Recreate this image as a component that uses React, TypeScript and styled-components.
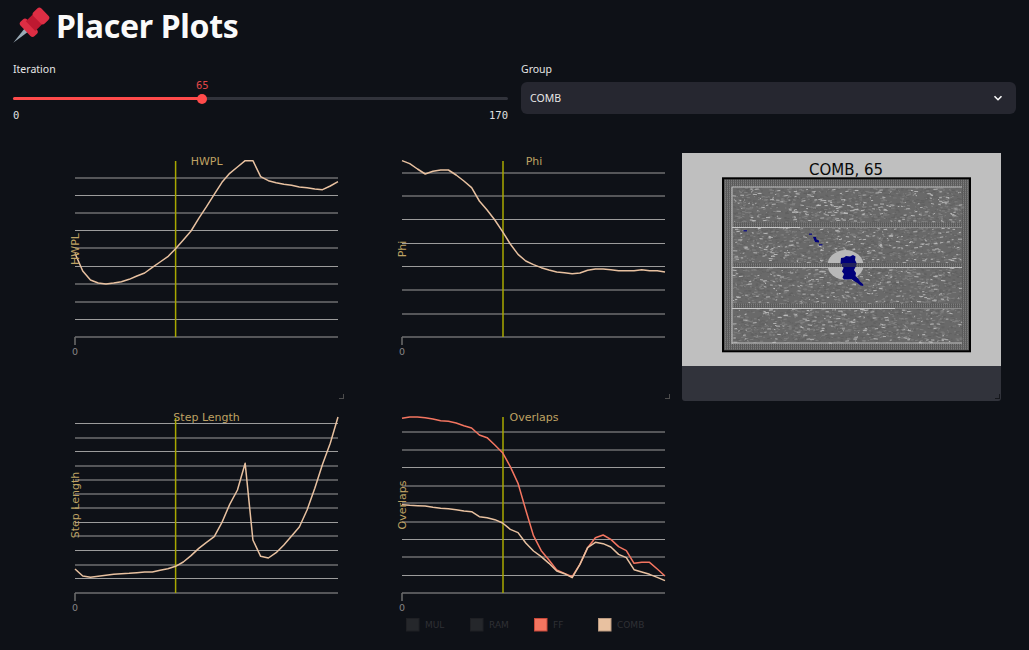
import React, { useMemo } from "react";
import styled, { createGlobalStyle } from "styled-components";

const GlobalStyle = createGlobalStyle`
  html, body {
    margin: 0;
    height: 100%;
    overflow: hidden;
    background: #0e1117;
  }
`;

const Page = styled.div`
  width: 1029px;
  height: 650px;
  padding: 0 13px;
  box-sizing: border-box;
  background: #0e1117;
  color: #fafafa;
  font-family: "Noto Sans", sans-serif;
`;

const Header = styled.header`
  display: flex;
  align-items: center;
  gap: 6px;
  height: 52px;
  margin: 0 0 10px -1px;
`;

const Title = styled.h1`
  margin: 0;
  font-size: 32px;
  line-height: 52px;
  font-weight: 700;
  letter-spacing: -0.3px;
`;

const Controls = styled.section`
  display: grid;
  grid-template-columns: 495px 495px;
  column-gap: 13px;
`;

const Field = styled.div`
  display: flex;
  flex-direction: column;
`;

const FieldLabel = styled.label`
  height: 20px;
  font-size: 10.5px;
  line-height: 15px;
  color: #e6e6e6;
`;

const SliderBody = styled.div`
  position: relative;
  height: 40px;
  padding-top: 15px;
  box-sizing: border-box;
`;

const Track = styled.div`
  height: 3px;
  border-radius: 2px;
  background: #31333b;
`;

const TrackFill = styled.div`
  height: 100%;
  border-radius: 2px;
  background: #ff4b4b;
`;

const Thumb = styled.div`
  position: absolute;
  top: 11.5px;
  width: 10px;
  height: 10px;
  margin-left: -5px;
  border-radius: 50%;
  background: #ff4b4b;
`;

const ThumbValue = styled.div`
  position: absolute;
  top: -3px;
  width: 40px;
  margin-left: -20px;
  text-align: center;
  font-family: "DejaVu Sans Mono", monospace;
  font-size: 10.5px;
  line-height: 12px;
  color: #e04646;
`;

const SliderTicks = styled.div`
  display: flex;
  justify-content: space-between;
  margin-top: 9px;
  font-family: "DejaVu Sans Mono", monospace;
  font-size: 10.5px;
  line-height: 12px;
  color: #e0e0e0;
`;

const Select = styled.div`
  display: flex;
  align-items: center;
  justify-content: space-between;
  height: 32px;
  padding: 0 13px 1px 9px;
  box-sizing: border-box;
  border-radius: 6px;
  background: #262730;
  font-size: 10.5px;
  color: #e6e6e6;
`;

const Board = styled.section`
  display: grid;
  grid-template-columns: 329px 326px 319px;
  grid-template-rows: 256px 239px;
  margin: 23px 0 0 3px;
`;

const ChartCell = styled.div`
  position: relative;
`;

const ChartSvg = styled.svg`
  display: block;
  width: 100%;
  height: 100%;
`;

const ResizeHandle = styled.span<{ $color: string }>`
  position: absolute;
  right: 1px;
  bottom: 2px;
  width: 4px;
  height: 4px;
  border-right: 1px solid ${({ $color }) => $color};
  border-bottom: 1px solid ${({ $color }) => $color};
`;

const Panel = styled.div`
  position: relative;
  display: flex;
  flex-direction: column;
  height: 248px;
  margin: 8px 0 0 11px;
  width: 319px;
  border-radius: 0 0 3px 3px;
  overflow: hidden;
  background: #31333b;
`;

const PanelSvg = styled.svg`
  display: block;
  width: 319px;
  height: 213px;
  flex: none;
`;

const GridLine = styled.line`
  stroke: #9c9c9c;
  stroke-width: 1;
`;

const AxisTick = styled.line`
  stroke: #6e6e6e;
  stroke-width: 1.5;
`;

const Marker = styled.line`
  stroke: #a8a800;
  stroke-width: 1.5;
`;

const Curve = styled.polyline<{ $color: string }>`
  fill: none;
  stroke: ${({ $color }) => $color};
  stroke-width: 1.5;
  stroke-linejoin: round;
`;

const ChartText = styled.text`
  font-family: "DejaVu Sans", sans-serif;
  font-size: 11px;
  fill: #bfa263;
`;

const TickText = styled.text`
  font-family: "DejaVu Sans", sans-serif;
  font-size: 9.5px;
  fill: #858585;
`;

const LegendText = styled.text`
  font-family: "DejaVu Sans", sans-serif;
  font-size: 9px;
  fill: #2e3035;
`;

const LegendSwatch = styled.rect<{ $fill: string; $line: string }>`
  fill: ${({ $fill }) => $fill};
  stroke: ${({ $line }) => $line};
  stroke-width: 1;
`;

const FigureTitle = styled.text`
  font-family: "DejaVu Sans", sans-serif;
  font-size: 15px;
  fill: #0a0a0a;
`;

const COMB = "#e8c1a0";
const FF = "#f47560";

interface Series {
  color: string;
  values: number[]; // page y offsets times 3, measured against base
}

interface ChartSpec {
  title: string;
  left: number; // page x of the y axis
  top: number; // page y of the cell
  height: number;
  width: number;
  cellLeft: number;
  base: number; // y offset the series values are measured from
  bottom: number;
  markerX: number;
  markerTop: number;
  titleY: number;
  labelY: number;
  grid: number[];
  series: Series[];
  legend?: boolean;
  handle?: boolean;
}

const charts: ChartSpec[] = [
  {
    title: "HWPL",
    cellLeft: 16,
    left: 75,
    top: 145,
    width: 329,
    height: 256,
    base: 145,
    bottom: 337,
    markerX: 175.6,
    markerTop: 161,
    titleY: 165,
    labelY: 249,
    grid: [178, 195.5, 213, 230.5, 248, 266.5, 284, 302, 319.5, 337],
    handle: true,
    series: [
      {
        color: COMB,
        values: [
          325, 378, 405, 414, 417, 414, 410, 403, 393, 384, 367, 351, 335, 311,
          285, 258, 220, 185, 148, 112, 85, 66, 47, 47, 95, 107, 113, 118, 121,
          126, 128, 132, 134, 123, 110,
        ],
      },
    ],
  },
  {
    title: "Phi",
    cellLeft: 345,
    left: 402,
    top: 145,
    width: 326,
    height: 256,
    base: 145,
    bottom: 337,
    markerX: 503,
    markerTop: 161,
    titleY: 165,
    labelY: 249,
    grid: [173, 196, 219.5, 243.5, 266.5, 290, 314, 337],
    handle: true,
    series: [
      {
        color: COMB,
        values: [
          47, 56, 72, 87, 79, 75, 75, 90, 108, 128, 168, 195, 225, 260, 297, 328,
          348, 359, 368, 375, 381, 383, 386, 384, 376, 372, 372, 374, 377, 377,
          377, 374, 377, 377, 381,
        ],
      },
    ],
  },
  {
    title: "Step Length",
    cellLeft: 16,
    left: 75,
    top: 401,
    width: 329,
    height: 239,
    base: 405,
    bottom: 593,
    markerX: 175.6,
    markerTop: 418,
    titleY: 421,
    labelY: 505,
    grid: [
      423.5, 438, 451.5, 466, 480, 494, 508, 522.5, 536, 550.5, 565, 578.5, 593,
    ],
    series: [
      {
        color: COMB,
        values: [
          492, 513, 517, 514, 511, 508, 506, 505, 503, 501, 501, 496, 491, 484,
          471, 452, 430, 412, 395, 352, 298, 255, 175, 405, 454, 459, 443, 420,
          393, 366, 315, 250, 178, 115, 36,
        ],
      },
    ],
  },
  {
    title: "Overlaps",
    cellLeft: 345,
    left: 402,
    top: 401,
    width: 326,
    height: 239,
    base: 405,
    bottom: 593,
    markerX: 503,
    markerTop: 417,
    titleY: 421,
    labelY: 505,
    grid: [432, 450, 467.5, 486, 503, 522, 539.5, 557, 575.5, 593],
    legend: true,
    series: [
      {
        color: FF,
        values: [
          40, 36, 36, 38, 42, 47, 49, 54, 62, 69, 90, 98, 120, 143, 185, 235, 315,
          392, 437, 465, 495, 505, 515, 478, 428, 398, 390, 403, 425, 437, 475,
          472, 472, 492, 513,
        ],
      },
      {
        color: COMB,
        values: [
          299, 301, 302, 303, 307, 310, 311, 314, 318, 320, 335, 338, 344, 354,
          373, 383, 414, 438, 455, 475, 498, 506, 518, 478, 428, 412, 416, 426,
          448, 458, 494, 501, 508, 517, 527,
        ],
      },
    ],
  },
];

const legendItems = [
  { label: "MUL", x: 406, fill: "#25272b", line: "#1f2024" },
  { label: "RAM", x: 470, fill: "#25272b", line: "#1f2024" },
  { label: "FF", x: 534, fill: "#f47560", line: "#c9493a" },
  { label: "COMB", x: 598, fill: "#e8c1a0", line: "#b99a80" },
];

const AXIS_WIDTH = 263;

const Chart: React.FC<{ spec: ChartSpec }> = ({ spec }) => (
  <ChartCell>
    <ChartSvg viewBox={`${spec.cellLeft} ${spec.top} ${spec.width} ${spec.height}`}>
      {spec.grid.map((y) => (
        <GridLine key={y} x1={spec.left} x2={spec.left + AXIS_WIDTH} y1={y} y2={y} />
      ))}
      <AxisTick x1={spec.left} x2={spec.left} y1={spec.bottom} y2={spec.bottom + 8} />
      <TickText x={spec.left} y={spec.bottom + 18} textAnchor="middle">
        0
      </TickText>
      <Marker x1={spec.markerX} x2={spec.markerX} y1={spec.markerTop} y2={spec.bottom} />
      {spec.series.map((s) => (
        <Curve
          key={s.color}
          $color={s.color}
          points={s.values
            .map((v, i) => `${spec.left + (AXIS_WIDTH * i) / 34},${spec.base + v / 3}`)
            .join(" ")}
        />
      ))}
      <ChartText x={spec.markerX + 31} y={spec.titleY} textAnchor="middle">
        {spec.title}
      </ChartText>
      <ChartText
        x={spec.left + 4}
        y={spec.labelY}
        textAnchor="middle"
        transform={`rotate(-90 ${spec.left + 4} ${spec.labelY})`}
      >
        {spec.title}
      </ChartText>
      {spec.legend &&
        legendItems.map((item) => (
          <g key={item.label}>
            <LegendSwatch
              x={item.x + 0.5}
              y={618.5}
              width={12.5}
              height={12.5}
              $fill={item.fill}
              $line={item.line}
            />
            <LegendText x={item.x + 19} y={628}>
              {item.label}
            </LegendText>
          </g>
        ))}
    </ChartSvg>
    {spec.handle && <ResizeHandle $color="#4c4c4c" />}
  </ChartCell>
);

function makeNoise(count: number, seed: number, maxLength: number) {
  let state = seed;
  const rand = () => {
    state = (state * 1664525 + 1013904223) % 4294967296;
    return state / 4294967296;
  };
  let d = "";
  for (let i = 0; i < count; i++) {
    const x = 732 + rand() * 229;
    const y = 188 + rand() * 155;
    const w = 0.8 + rand() * maxLength;
    const tilt = (rand() - 0.5) * 1.2;
    d += `M${x.toFixed(1)} ${y.toFixed(1)}l${w.toFixed(1)} ${tilt.toFixed(1)}`;
  }
  return d;
}

const bands = [222.5, 263, 303.5];

// light rows between the macro bands: [y, from, to, colour]
const rowLines: [number, number, number, string][] = [
  [187, 732, 962, "#bdbdbd"],
  [227.5, 732, 800, "#c8c8c8"],
  [227.5, 800, 962, "#8c8c8c"],
  [267.5, 732, 962, "#bdbdbd"],
  [308.5, 732, 895, "#c8c8c8"],
  [308.5, 895, 962, "#8c8c8c"],
  [343, 732, 962, "#c0c0c0"],
];

const BLOB =
  "M841 258 L844 257.5 L846 256 L850 256.5 L853 255 L855.5 256.5 L855 260 L856.5 263 L855.5 267 L854 270 L856 273 L855.5 276 L858.5 279 L860 281.5 L863 284 L863.5 286 L860.5 285.5 L857.5 283 L854 281 L851.5 279 L848 279.5 L844 279.5 L842.5 277.5 L844 274 L842 271.5 L843.5 268 L842.5 265 L840.5 263 Z";

// the placement plot: noise of placed cells, macro rows, and the blue cluster
const PlacementFigure: React.FC = () => {
  const noiseDark = useMemo(() => makeNoise(2600, 11, 3), []);
  const noiseMid = useMemo(() => makeNoise(2200, 29, 3), []);
  const noiseLight = useMemo(() => makeNoise(800, 47, 3.5), []);

  return (
    <PanelSvg viewBox="682 153 319 213">
      <defs>
        <pattern id="hatch" width="2" height="2" patternUnits="userSpaceOnUse">
          <rect width="2" height="2" fill="#7c7c7c" />
          <rect width="1" height="2" fill="#585858" />
          <rect y="1" width="2" height="0.6" fill="#5e5e5e" />
        </pattern>
      </defs>
      <rect x="682" y="153" width="319" height="213" fill="#bfbfbf" />
      <FigureTitle x="846" y="175" textAnchor="middle">
        COMB, 65
      </FigureTitle>
      <rect x="723" y="178" width="247" height="173" fill="#686868" />
      <rect x="724" y="179" width="245" height="171" fill="url(#hatch)" />
      <rect x="732" y="187" width="230" height="157" fill="#696969" />
      <path d={noiseDark} stroke="#606060" strokeWidth="0.9" fill="none" />
      <path d={noiseMid} stroke="#828282" strokeWidth="0.9" fill="none" />
      <path d={noiseLight} stroke="#bdbdbd" strokeWidth="0.9" fill="none" />
      <ellipse cx="845.5" cy="265" rx="18" ry="15" fill="#b8b8b8" />
      {bands.map((y) => (
        <rect key={y} x="732" y={y} width="230" height="4.5" fill="url(#hatch)" />
      ))}
      {rowLines.map(([y, x1, x2, color]) => (
        <line key={`${y}-${x1}`} x1={x1} x2={x2} y1={y} y2={y} stroke={color} strokeWidth="1" />
      ))}
      <line x1="732" x2="732" y1="187" y2="344" stroke="#c4c4c4" strokeWidth="1" />
      <path d={BLOB} fill="#00007a" />
      <rect x="842" y="263" width="14" height="4" fill="#23235c" />
      <path d="M813 237 L816 237 L816.5 239.5 L819 240.5 L819 242.5 L815 242 Z" fill="#00007a" />
      <rect x="809" y="233.5" width="3" height="1.5" fill="#1b1b80" />
      <rect x="819" y="244" width="3.5" height="1.5" fill="#1b1b80" />
      <rect x="743.5" y="230" width="3.5" height="1.5" fill="#1b1b80" />
      <rect x="723" y="178.3" width="247" height="173" fill="none" stroke="#000" strokeWidth="2" />
    </PanelSvg>
  );
};

const PushPin: React.FC = () => (
  <svg width="38" height="40" viewBox="12 5 38 40" style={{ flex: "none" }}>
    <g transform="translate(13.3 41.7) rotate(-44)">
      <polygon points="0,0 19,-2.6 19,2.6" fill="#99aab5" />
      <rect x="17" y="-10" width="9" height="20" rx="3" fill="#dd2e44" />
      <rect x="24" y="-6.8" width="11" height="13.6" fill="#be1931" />
      <rect x="33" y="-8" width="11" height="16" rx="3" fill="#dd2e44" />
    </g>
  </svg>
);

const Chevron: React.FC = () => (
  <svg width="10" height="10" viewBox="0 0 10 10">
    <path d="M1.5 3.2 L5 6.7 L8.5 3.2" fill="none" stroke="#fafafa" strokeWidth="1.6" />
  </svg>
);

const ITERATION = 65;
const MAX_ITERATION = 170;

export default function App() {
  const pct = `${(ITERATION / MAX_ITERATION) * 100}%`;
  return (
    <Page>
      <GlobalStyle />
      <Header>
        <PushPin />
        <Title>Placer Plots</Title>
      </Header>

      <Controls>
        <Field>
          <FieldLabel>Iteration</FieldLabel>
          <SliderBody>
            <ThumbValue style={{ left: pct }}>{ITERATION}</ThumbValue>
            <Track>
              <TrackFill style={{ width: pct }} />
            </Track>
            <Thumb style={{ left: pct }} />
            <SliderTicks>
              <span>0</span>
              <span>{MAX_ITERATION}</span>
            </SliderTicks>
          </SliderBody>
        </Field>
        <Field>
          <FieldLabel>Group</FieldLabel>
          <Select>
            <span>COMB</span>
            <Chevron />
          </Select>
        </Field>
      </Controls>

      <Board>
        <Chart spec={charts[0]} />
        <Chart spec={charts[1]} />
        <Panel>
          <PlacementFigure />
          <ResizeHandle $color="#15171c" />
        </Panel>
        <Chart spec={charts[2]} />
        <Chart spec={charts[3]} />
      </Board>
    </Page>
  );
}
